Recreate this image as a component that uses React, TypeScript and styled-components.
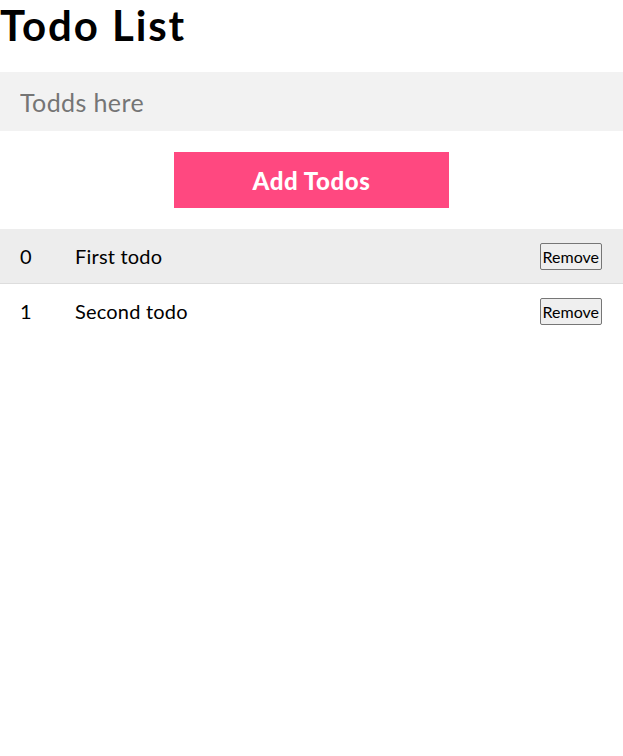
import styled, { createGlobalStyle } from "styled-components";

const GlobalStyle = createGlobalStyle`
  body {
    margin: 0;
    background: #fff;
    font-family: Lato, "Noto Sans", sans-serif;
    color: #000;
  }
`;

const todos = ["First todo", "Second todo"];

export default function App() {
  return (
    <>
      <GlobalStyle />
      <Page>
        <Title>Todo List</Title>
        <TodoInput placeholder="Todds here" />
        <AddButton>Add Todos</AddButton>
        <List>
          {todos.map((t, i) => (
            <Row key={i} $odd={i % 2 === 0}>
              <Index>{i}</Index>
              <Text>{t}</Text>
              <RemoveBtn>Remove</RemoveBtn>
            </Row>
          ))}
        </List>
      </Page>
    </>
  );
}

const Page = styled.div`
  display: flex;
  flex-direction: column;
  width: 100%;
`;

const Title = styled.h1`
  margin: 0 0 22px;
  font-size: 42px;
  line-height: 50px;
  font-weight: 700;
  letter-spacing: 1.9px;
`;

const TodoInput = styled.input`
  height: 59px;
  box-sizing: border-box;
  border: none;
  background: #f2f2f2;
  padding: 0 20px;
  font-family: Lato, sans-serif;
  font-size: 25px;
  letter-spacing: 0.4px;
  color: #333;
  outline: none;
  &::placeholder {
    color: #757575;
  }
`;

const AddButton = styled.button`
  align-self: center;
  margin-top: 21px;
  width: 275px;
  height: 56px;
  border: none;
  background: #ff4880;
  color: #fff;
  font-family: Lato, sans-serif;
  font-weight: 900;
  font-size: 24px;
  letter-spacing: 0.6px;
  cursor: pointer;
`;

const List = styled.ul`
  list-style: none;
  margin: 21px 0 0;
  padding: 0;
`;

const Row = styled.li<{ $odd: boolean }>`
  display: flex;
  align-items: center;
  height: 54px;
  padding: 0 21px 0 20px;
  background: ${(p) => (p.$odd ? "#ededed" : "#fff")};
  border-bottom: 1px solid ${(p) => (p.$odd ? "#dddddd" : "transparent")};
  font-size: 20px;
  letter-spacing: 0.2px;
`;

const Index = styled.span`
  width: 55px;
`;

const Text = styled.span`
  flex: 1;
`;

const RemoveBtn = styled.button`
  font-family: Lato, sans-serif;
  font-size: 16px;
  padding: 3px 2px;
  border: 1px solid #767676;
  border-radius: 2px;
  background: #efefef;
  color: #000;
`;
